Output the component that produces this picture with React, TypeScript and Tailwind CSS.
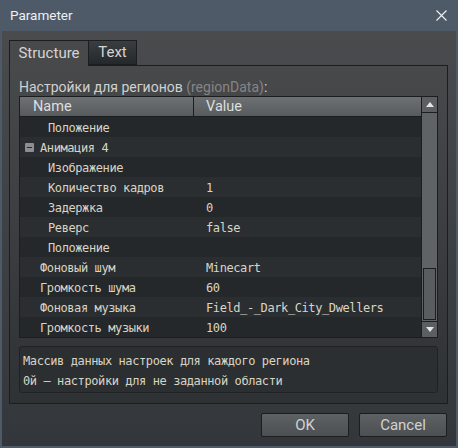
import React from "react";

type Row = {
  name: string;
  value?: string;
  indent: number;
  expander?: boolean;
};

const rows: Row[] = [
  { name: "Положение", indent: 28 },
  { name: "Анимация 4", indent: 20, expander: true },
  { name: "Изображение", indent: 28 },
  { name: "Количество кадров", value: "1", indent: 28 },
  { name: "Задержка", value: "0", indent: 28 },
  { name: "Реверс", value: "false", indent: 28 },
  { name: "Положение", indent: 28 },
  { name: "Фоновый шум", value: "Minecart", indent: 20 },
  { name: "Громкость шума", value: "60", indent: 20 },
  { name: "Фоновая музыка", value: "Field_-_Dark_City_Dwellers", indent: 20 },
  { name: "Громкость музыки", value: "100", indent: 20 },
];

const sans = "font-['Roboto','Open_Sans',sans-serif]";
const mono = "font-['DejaVu_Sans_Mono','Liberation_Mono',monospace]";

function Scrollbar() {
  return (
    <div className="w-[16px] flex flex-col bg-[#5f6366] border-l border-[#1c1d1e]">
      <div className="h-[16px] border-b border-[#1c1d1e] bg-[#5b5f62] flex items-center justify-center">
        <svg width="8" height="5" viewBox="0 0 8 5">
          <path d="M0 5 L4 0 L8 5 Z" fill="#e6e6e6" />
        </svg>
      </div>
      <div className="flex-1 flex flex-col justify-end pb-[1px]">
        <div className="h-[52px] mx-[1px] border border-[#1c1d1e] bg-[#595d60]" />
      </div>
      <div className="h-[16px] border-t border-[#1c1d1e] bg-[#5b5f62] flex items-center justify-center">
        <svg width="8" height="5" viewBox="0 0 8 5">
          <path d="M0 0 L8 0 L4 5 Z" fill="#e6e6e6" />
        </svg>
      </div>
    </div>
  );
}

function PropertyTable() {
  return (
    <div className="flex h-[242px] border border-[#1c1d1e]">
      <div className="flex-1 flex flex-col">
        <div
          className={`h-[20px] flex border-b border-[#1c1d1e] bg-gradient-to-b from-[#6d7173] to-[#575b5e] text-[14.5px] text-[#dedede] ${sans}`}
        >
          <div className="w-[174px] border-r border-[#1c1d1e] pl-[13px] flex items-center">
            Name
          </div>
          <div className="flex-1 pl-[12px] flex items-center">Value</div>
        </div>
        {rows.map((r, i) => (
          <div
            key={i}
            className={`h-[20px] pt-[1px] flex items-center text-[12px] tracking-[-0.4px] text-[#d9d4c4] ${mono} ${
              i % 2 === 0 ? "bg-[#25282b]" : "bg-[#2b2e31]"
            }`}
          >
            <div
              className="w-[174px] flex items-center"
              style={{ paddingLeft: r.indent }}
            >
              {r.expander && (
                <span className="-ml-[15px] mr-[6px] w-[9px] h-[9px] rounded-[1px] bg-[#8c8f91] flex items-center justify-center">
                  <span className="w-[5px] h-[1px] bg-[#25282b]" />
                </span>
              )}
              {r.name}
            </div>
            <div className="flex-1 pl-[12px]">{r.value}</div>
          </div>
        ))}
      </div>
      <Scrollbar />
    </div>
  );
}

export default function App() {
  return (
    <div className="w-[458px] h-[448px] bg-[#4e5a68] px-[2px] pb-[2px] flex flex-col">
      <div className="h-[31px] flex items-center justify-between pl-[8px] pr-[9px]">
        <span className={`text-[13.5px] text-[#eef0f2] ${sans}`}>Parameter</span>
        <svg width="11" height="11" viewBox="0 0 11 11">
          <path d="M0.5 0.5 L10.5 10.5 M10.5 0.5 L0.5 10.5" stroke="#f2f2f2" strokeWidth="1.1" />
        </svg>
      </div>
      <div className="flex-1 flex flex-col bg-gradient-to-b from-[#494b4d] to-[#33373b] pl-[7px] pr-[8px] pt-[9px]">
        <div className={`h-[25px] flex text-[15px] ${sans}`}>
          <div className="relative z-10 w-[80px] -mb-px h-[26px] border border-b-0 border-[#1c1d1e] bg-[#48494b] text-[#d4d4d4] flex items-center justify-center">
            Structure
          </div>
          <div className="w-[48px] border border-l-0 border-[#1c1d1e] bg-gradient-to-b from-[#3b3e41] to-[#25282b] text-[#d4d4d4] flex items-center justify-center">
            Text
          </div>
        </div>
        <div className="h-[339px] border border-[#1c1d1e] bg-gradient-to-b from-[#48494b] to-[#2f3235] px-[9px]">
          <div className={`pt-[13px] h-[30px] text-[14px] leading-[17px] text-[#d0d0d0] ${sans}`}>
            Настройки для регионов <span className="text-[#858585]">(regionData)</span>:
          </div>
          <PropertyTable />
          <div
            className={`mt-[8px] h-[47px] rounded-[3px] border border-[#1f2123] bg-[#2c2f32] pl-[3px] pt-[4px] text-[12px] tracking-[-0.4px] leading-[20px] text-[#d9d4c4] ${mono}`}
          >
            <div>Массив данных настроек для каждого региона</div>
            <div>0й — настройки для не заданной области</div>
          </div>
        </div>
        <div className={`mt-[9px] flex justify-end gap-[10px] pr-[1px] text-[15px] ${sans}`}>
          <button className="w-[88px] h-[24px] rounded-[2px] border border-[#1c1d1e] bg-gradient-to-b from-[#5d6164] to-[#4c5053] text-[#d2d2d2]">
            OK
          </button>
          <button className="w-[88px] h-[24px] rounded-[2px] border border-[#1c1d1e] bg-gradient-to-b from-[#5d6164] to-[#4c5053] text-[#d2d2d2]">
            Cancel
          </button>
        </div>
      </div>
    </div>
  );
}
